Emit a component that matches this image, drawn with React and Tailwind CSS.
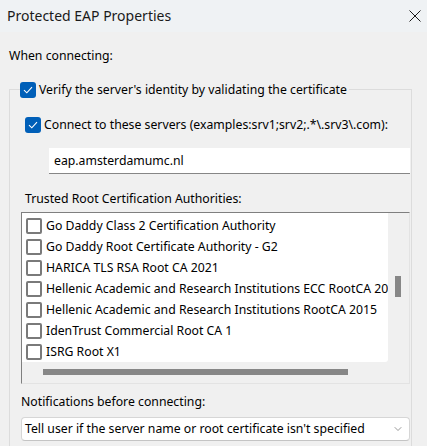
import { ChevronDown } from "lucide-react";

const certs = [
  "Go Daddy Class 2 Certification Authority",
  "Go Daddy Root Certificate Authority - G2",
  "HARICA TLS RSA Root CA 2021",
  "Hellenic Academic and Research Institutions ECC RootCA 2015",
  "Hellenic Academic and Research Institutions RootCA 2015",
  "IdenTrust Commercial Root CA 1",
  "ISRG Root X1",
];

function BlueCheck() {
  return (
    <span className="w-[16px] h-[16px] shrink-0 rounded-[3px] bg-[#005fb8] flex items-center justify-center">
      <svg width="10" height="8" viewBox="0 0 10 8" fill="none">
        <path d="M1 4.2 L3.8 6.8 L9 1.2" stroke="white" strokeWidth="1.1" />
      </svg>
    </span>
  );
}

function EmptyCheck() {
  return <span className="w-[16px] h-[16px] shrink-0 rounded-[2px] border-2 border-[#7a7a7a] bg-white" />;
}

export default function App() {
  return (
    <div
      className="w-[427px] h-[446px] overflow-hidden bg-[#f0f0f0] text-[12.25px] leading-[16px] text-[#000]"
      style={{ fontFamily: '"Noto Sans", "Open Sans", sans-serif' }}
    >
      {/* barra de título */}
      <div className="h-[32px] bg-[#eff2f4] flex items-center justify-between pl-[7px] pr-[6px]">
        <span className="text-[14px] text-[#1a1a1a]">Protected EAP Properties</span>
        <svg width="12" height="12" viewBox="0 0 12 12">
          <path d="M0.5 0.5 L11.5 11.5 M11.5 0.5 L0.5 11.5" stroke="#1a1a1a" strokeWidth="1" />
        </svg>
      </div>

      <div className="px-[9px] pt-[16px]">
        <div>When connecting:</div>

        <div className="mt-[25px] w-[403px] h-[400px] border border-[#dcdcdc]">
          <div className="-mt-[8px] ml-[10px] flex items-center gap-[3px] w-fit bg-[#f0f0f0] pr-[2px]">
            <BlueCheck />
            <span>Verify the server's identity by validating the certificate</span>
          </div>

          <div className="mt-[19px] ml-[15px] flex items-center gap-[3px]">
            <BlueCheck />
            <span>Connect to these servers (examples:srv1;srv2;.*\.srv3\.com):</span>
          </div>

          <div className="mt-[15px] ml-[39px] mr-[1px] h-[26px] bg-white border-b border-[#868686] flex items-center pl-[5px]">
            eap.amsterdamumc.nl
          </div>

          <div className="mt-[17px] ml-[15px]">Trusted Root Certification Authorities:</div>

          <div className="mt-[5px] ml-[11px] mr-[1px] h-[172px] border-t border-l border-[#7f7f7f] border-r border-b border-r-[#e3e3e3] border-b-[#e3e3e3] flex flex-col">
            <div className="flex flex-1 min-h-0">
              <div className="w-[366px] bg-white pt-[2px] overflow-hidden rounded-br-[3px]">
                {certs.map((c) => (
                  <div key={c} className="h-[21px] flex items-center gap-[4px] pl-[4px] whitespace-nowrap">
                    <EmptyCheck />
                    <span>{c}</span>
                  </div>
                ))}
              </div>
              <div className="flex-1 pt-[63px] pl-[7px]">
                <div className="w-[6px] h-[21px] bg-[#878787]" />
              </div>
            </div>
            <div className="h-[21px] pt-[7px] pl-[21px]">
              <div className="w-[305px] h-[6px] bg-[#878787]" />
            </div>
          </div>

          <div className="mt-[10px] ml-[11px]">Notifications before connecting:</div>

          <div className="mt-[7px] ml-[11px] mr-[1px] h-[24px] bg-white border border-[#d6d6d6] border-b-[#c4c4c4] rounded-[4px] flex items-center justify-between pl-[3px] pr-[5px]">
            <span>Tell user if the server name or root certificate isn't specified</span>
            <ChevronDown size={12} strokeWidth={1.25} color="#5c5c5c" />
          </div>
        </div>
      </div>
    </div>
  );
}
